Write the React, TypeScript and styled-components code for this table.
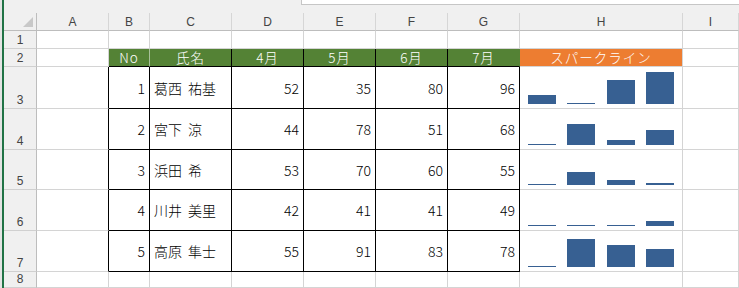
import React from "react";
import styled, { createGlobalStyle } from "styled-components";

const GlobalStyle = createGlobalStyle`
  html, body {
    margin: 0;
    padding: 0;
    background: #ffffff;
    overflow: hidden;
  }
`;

const GRID = "#d4d4d4";
const HEAD_LINE = "#bdbdbd";
const INK = "#000000";
const JP = `"Noto Sans CJK JP", "Noto Sans", sans-serif`;

const Frame = styled.div`
  display: flex;
  height: 288px;
  width: 739px;
  overflow: hidden;
`;

const EdgeStrip = styled.div`
  width: 2px;
  background: #e4e4e4;
  flex-shrink: 0;
`;

const GreenEdge = styled.div`
  width: 2px;
  background: #217346;
  flex-shrink: 0;
`;

const Main = styled.div`
  flex: 1;
  display: flex;
  flex-direction: column;
  min-width: 0;
`;

const TopBar = styled.div`
  height: 15px;
  background: #f0f0f0;
  display: flex;
  justify-content: flex-end;
  align-items: flex-start;
`;

const FormulaBox = styled.div`
  width: 437px;
  height: 4px;
  background: #ffffff;
  border-left: 1px solid #c6c6c6;
  border-bottom: 1px solid #c6c6c6;
`;

const Sheet = styled.div`
  flex: 1;
  display: grid;
  grid-template-columns: 33px 72px 41px 82px 72px 72px 72px 72px 163px 1fr;
  grid-template-rows: 18px 18px 18px 42px 41px 40px 41px 41px 1fr;
`;

const Corner = styled.div`
  background: #f0f0f0;
  border-right: 1px solid ${HEAD_LINE};
  border-bottom: 1px solid ${HEAD_LINE};
  display: flex;
  justify-content: flex-end;
  align-items: flex-end;
  padding: 0 3px 3px 0;
  box-sizing: border-box;
`;

const CornerMark = styled.div`
  width: 0;
  height: 0;
  border-left: 10px solid transparent;
  border-bottom: 10px solid #c8c8c8;
`;

const ColHead = styled.div`
  background: #f0f0f0;
  border-right: 1px solid #d6d6d6;
  border-bottom: 1px solid ${HEAD_LINE};
  box-sizing: border-box;
  display: flex;
  justify-content: center;
  align-items: center;
  font-family: "Liberation Sans", Arial, sans-serif;
  font-size: 12px;
  color: #444444;
  padding-top: 1px;
`;

const RowHead = styled.div`
  background: #f0f0f0;
  border-right: 1px solid ${HEAD_LINE};
  border-bottom: 1px solid #d0d0d0;
  box-sizing: border-box;
  display: flex;
  justify-content: center;
  align-items: flex-end;
  padding-bottom: 1px;
  font-family: "Liberation Sans", Arial, sans-serif;
  font-size: 12px;
  color: #444444;
`;

const Cell = styled.div<{ $right?: string; $bottom?: string }>`
  border-right: 1px solid ${(p) => p.$right ?? GRID};
  border-bottom: 1px solid ${(p) => p.$bottom ?? GRID};
  box-sizing: border-box;
  background: #ffffff;
  min-width: 0;
`;

const HeadCell = styled.div<{ $fill: string; $right: string; $bottom?: string }>`
  background: ${(p) => p.$fill};
  border-right: 1px solid ${(p) => p.$right};
  border-bottom: 1px solid ${(p) => p.$bottom ?? INK};
  box-sizing: border-box;
  display: flex;
  justify-content: center;
  align-items: center;
  color: #ffffff;
  font-family: ${JP};
  font-size: 13.5px;
  font-weight: 300;
  line-height: 1;
  letter-spacing: 1px;
`;

const DataCell = styled(Cell)<{ $align: "left" | "right" }>`
  display: flex;
  align-items: center;
  justify-content: ${(p) => (p.$align === "right" ? "flex-end" : "flex-start")};
  padding: ${(p) => (p.$align === "right" ? "0 4px 0 0" : "0 0 0 4px")};
  font-family: ${JP};
  font-size: 14px;
  font-weight: 300;
  color: #000000;
  white-space: nowrap;
  word-spacing: 3px;
`;

const SparkCell = styled(Cell)`
  display: flex;
  justify-content: space-between;
  align-items: flex-end;
  padding: 0 8px 4px 8px;
`;

const Bar = styled.div`
  width: 28px;
  background: #376092;
`;

type Row = {
  no: number;
  name: string;
  scores: number[];
  bars: number[];
  line: number;
};

const rows: Row[] = [
  { no: 1, name: "葛西 祐基", scores: [52, 35, 80, 96], bars: [9, 1, 24, 32], line: 3 },
  { no: 2, name: "宮下 涼", scores: [44, 78, 51, 68], bars: [1, 21, 5, 15], line: 4 },
  { no: 3, name: "浜田 希", scores: [53, 70, 60, 55], bars: [1, 13, 5, 2], line: 5 },
  { no: 4, name: "川井 美里", scores: [42, 41, 41, 49], bars: [1, 1, 1, 5], line: 6 },
  { no: 5, name: "高原 隼士", scores: [55, 91, 83, 78], bars: [1, 28, 22, 18], line: 7 },
];

const columns = ["A", "B", "C", "D", "E", "F", "G", "H", "I"];
const months = ["4月", "5月", "6月", "7月"];

export default function App() {
  return (
    <>
      <GlobalStyle />
      <Frame>
        <EdgeStrip />
        <GreenEdge />
        <Main>
          <TopBar>
            <FormulaBox />
          </TopBar>
          <Sheet>
            <Corner>
              <CornerMark />
            </Corner>
            {columns.map((c) => (
              <ColHead key={c}>{c}</ColHead>
            ))}

            {/* row 1 */}
            <RowHead>1</RowHead>
            {columns.map((c) => (
              <Cell key={"r1" + c} />
            ))}

            {/* row 2: header */}
            <RowHead>2</RowHead>
            <Cell />
            <HeadCell $fill="#548235" $right="#a8c09a">No</HeadCell>
            <HeadCell $fill="#548235" $right={INK}>氏名</HeadCell>
            {months.map((m, i) => (
              <HeadCell key={m} $fill="#548235" $right={i === 3 ? "#548235" : INK}>
                {m}
              </HeadCell>
            ))}
            <HeadCell $fill="#ed7d31" $right={GRID} $bottom={GRID}>
              スパークライン
            </HeadCell>
            <Cell />

            {rows.map((r) => (
              <React.Fragment key={r.no}>
                <RowHead>{r.line}</RowHead>
                <Cell $right={INK} />
                <DataCell $align="right" $right={INK} $bottom={INK}>
                  {r.no}
                </DataCell>
                <DataCell $align="left" $right={INK} $bottom={INK}>
                  {r.name}
                </DataCell>
                {r.scores.map((s, si) => (
                  <DataCell key={si} $align="right" $right={INK} $bottom={INK}>
                    {s}
                  </DataCell>
                ))}
                <SparkCell>
                  {r.bars.map((h, bi) => (
                    <Bar key={bi} style={{ height: h }} />
                  ))}
                </SparkCell>
                <Cell />
              </React.Fragment>
            ))}

            {/* row 8 */}
            <RowHead>8</RowHead>
            {columns.map((c) => (
              <Cell key={"r8" + c} />
            ))}
          </Sheet>
        </Main>
      </Frame>
    </>
  );
}
